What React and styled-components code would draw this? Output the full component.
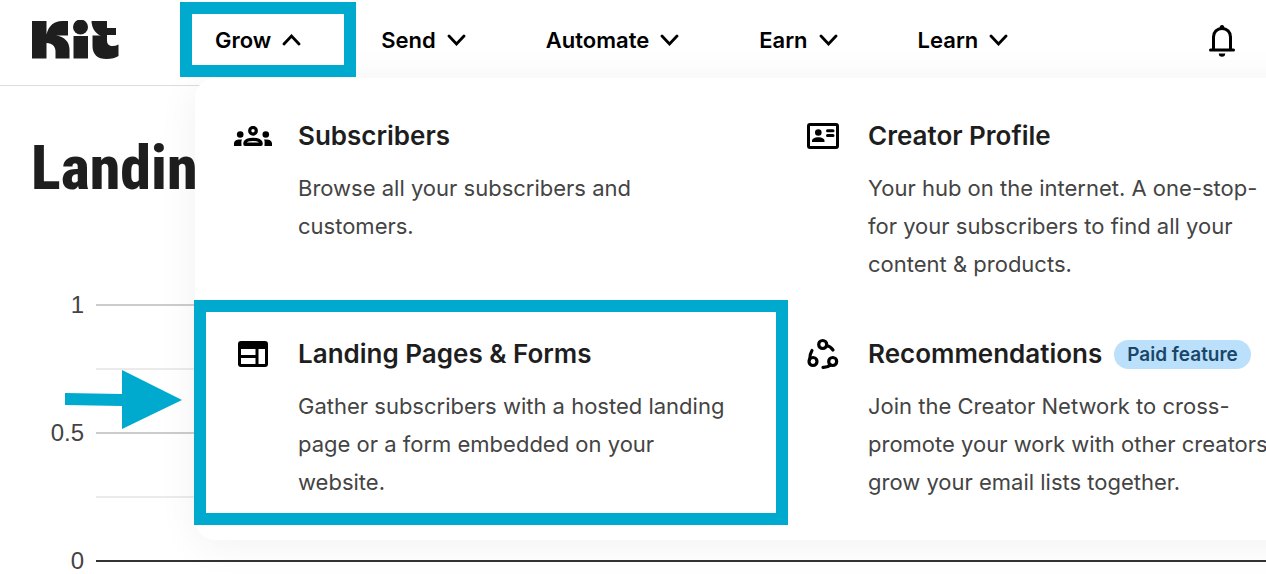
import React from 'react';
import styled, { createGlobalStyle, css } from 'styled-components';

const Global = createGlobalStyle`
  *, *::before, *::after { box-sizing: border-box; }
  body { margin: 0; background: #fff; font-family: Inter, "Liberation Sans", sans-serif; color: #1e1e1e; }
  h1, h2, p { margin: 0; }
`;

const ACCENT = '#00a9ce';

const Page = styled.div`
  position: relative;
  min-height: 100vh;
  overflow: hidden;
`;

const Header = styled.header`
  display: flex;
  align-items: center;
  height: 86px;
  padding: 0 31px 6px 32px;
  border-bottom: 1px solid #dcdcdc;
`;

const LogoLink = styled.a`
  display: block;
  width: 88px;
  height: 40px;
  margin-right: 95px;
  svg { display: block; }
`;

const Nav = styled.nav`
  position: relative;
  z-index: 2;
  display: flex;
  gap: 80px;
`;

const NavButton = styled.button`
  position: relative;
  display: flex;
  align-items: center;
  gap: 11px;
  padding: 0;
  border: 0;
  background: none;
  color: #000;
  font: 600 22px/32px Inter, "Liberation Sans", sans-serif;
  white-space: nowrap;
  svg { display: block; }
`;

const BellButton = styled.button`
  position: relative;
  z-index: 2;
  margin-left: auto;
  padding: 0;
  border: 0;
  background: none;
  svg { display: block; }
`;

const Highlight = styled.span`
  position: absolute;
  border: 12px solid ${ACCENT};
  pointer-events: none;
  ${(p) => p.$target === 'nav'
    ? css`inset: -22px -55px -21px -35px; background: #fff; z-index: -1;`
    : css`inset: -35px -23px -24px -1px;`}
`;

const Heading = styled.h1`
  padding: 50px 0 0 31px;
  font: 800 62px/64px "Roboto Condensed", "Open Sans Condensed", sans-serif;
  white-space: nowrap;
`;

const Chart = styled.div`
  display: flex;
  flex-direction: column;
  gap: 40px;
  padding-top: 93px;
`;

const ChartRow = styled.div`
  display: flex;
  align-items: center;
  gap: 12px;
  height: 24px;
`;

const AxisLabel = styled.span`
  width: 84px;
  text-align: right;
  font: 24px/24px "Liberation Sans", sans-serif;
  color: #444;
`;

const LINES = { major: '#ccc', minor: '#ebebeb', base: '#333' };

const GridLine = styled.span`
  flex: 1;
  height: 2px;
  background: ${(p) => LINES[p.$kind]};
`;

const Arrow = styled.svg`
  position: absolute;
  left: 65px;
  top: 370px;
  z-index: 2;
`;

const Menu = styled.div`
  position: absolute;
  top: 78px;
  left: 195px;
  z-index: 1;
  display: grid;
  grid-template-columns: 570px 570px;
  row-gap: 52px;
  padding: 39px 0;
  border-radius: 20px;
  background: #fff;
  box-shadow: 0 4px 42px rgba(0, 0, 0, 0.06);
`;

const MenuItem = styled.a`
  position: relative;
  display: grid;
  grid-template-columns: 40px 1fr;
  column-gap: 25px;
  padding-left: 38px;
  color: inherit;
  text-decoration: none;
`;

const IconSlot = styled.span`
  display: flex;
  align-items: center;
  justify-content: center;
  height: 38px;
`;

const TitleRow = styled.div`
  display: flex;
  align-items: center;
  gap: 12px;
`;

const Title = styled.h2`
  font-size: 26px;
  line-height: 38px;
  font-weight: 600;
  white-space: nowrap;
`;

const Badge = styled.span`
  padding: 0 13px;
  border-radius: 15px;
  background: #bae0fb;
  color: #1a4769;
  font-size: 19px;
  line-height: 29px;
  font-weight: 600;
  white-space: nowrap;
`;

const Description = styled.p`
  margin-top: 14px;
  min-height: 114px;
  color: #444;
  font-size: 22px;
  line-height: 38px;
  white-space: pre-line;
  min-width: max-content;
`;

const Logo = () => (
  <svg width="88" height="40" viewBox="0 0 88 40" fill="#1e1e1e" aria-hidden="true">
    <path d="M0 1h14.500v13.500C16.500 6 22 1 30 1h6v14.500H24c8 1 13.500 6 13.500 14v9h-14v-7c0-5-3-8-9-8.500v15.500H0z" />
    <circle cx="48.500" cy="7" r="7.500" />
    <path d="M41.500 16h14.500v22.500H41.500z" />
    <path d="M59.500 1H75v7h9v7h-9v5.500c0 4 2.500 5.500 5.500 5.500 2 0 4-.5 6-1.500V36c-3 2-7 3-12 3-9 0-14-4.500-14-13V15.500h8.500C64 14.500 59.500 8 59.500 1z" />
  </svg>
);

const Chevron = ({ up }) => (
  <svg width="19" height="12" viewBox="0 0 19 12" fill="none" stroke="#000" strokeWidth="2.800" strokeLinecap="round" aria-hidden="true">
    <path d={up ? 'M2 10l7.500-8 7.500 8' : 'M2 2l7.500 8 7.500-8'} />
  </svg>
);

const Bell = () => (
  <svg width="26" height="34" viewBox="0 -1 26 34" fill="none" stroke="#000" aria-hidden="true">
    <path d="M4.500 25V13c0-5 3.500-8.500 8.500-8.500s8.500 3.500 8.500 8.500v12" strokeWidth="3" />
    <path d="M1.500 26h23" strokeWidth="3" strokeLinecap="round" />
    <path d="M10.500 4.500a2.500 3.500 0 0 1 5 0zM9.800 29.500h6.400a3.200 3.200 0 0 1-6.400 0z" fill="#000" stroke="none" />
  </svg>
);

const People = () => (
  <svg width="38" height="20" viewBox="0 0 38 20" aria-hidden="true">
    <circle cx="6.200" cy="8.500" r="3.300" />
    <circle cx="31.800" cy="8.500" r="3.300" />
    <path d="M0 20v-2.500C0 14.500 3 13 8 13.500 7 15 7.500 17 7.500 20zM38 20v-2.500c0-3-3-4.500-8-4 1 1.500.5 3.500.5 6.500z" />
    <circle cx="19" cy="4.800" r="3.300" fill="none" stroke="#000" strokeWidth="3.200" />
    <path d="M11 18.200v-.7c0-5.500 16-5.500 16 0v.7z" fill="none" stroke="#000" strokeWidth="3.400" strokeLinejoin="round" />
  </svg>
);

const Card = () => (
  <svg width="32" height="26" viewBox="0 0 32 26" aria-hidden="true">
    <rect x="1.500" y="1.500" width="29" height="23" rx="1.500" fill="none" stroke="#000" strokeWidth="3" />
    <circle cx="11.300" cy="9.500" r="3.300" />
    <path d="M5 19v-1c0-5 12.500-5 12.500 0v1z" />
    <path d="M20.500 7.700h5.500M20.500 12.500h5.500" stroke="#000" strokeWidth="3" strokeLinecap="round" />
  </svg>
);

const Layout = () => (
  <svg width="30" height="26" viewBox="0 0 30 26" fill="none" stroke="#000" aria-hidden="true">
    <rect x="1.500" y="1.500" width="27" height="23" rx="1.500" strokeWidth="3" />
    <path d="M1.500 4.500h27M1.500 15.500h17M19 7v18" strokeWidth="3" />
    <path d="M2 6h26" strokeWidth="4" />
  </svg>
);

const Network = () => (
  <svg width="32" height="32" viewBox="0 0 32 32" fill="none" stroke="#000" strokeWidth="3.200" strokeLinecap="round" aria-hidden="true">
    <circle cx="15.700" cy="6.500" r="4" />
    <circle cx="6" cy="23.500" r="4" />
    <circle cx="25.700" cy="23.500" r="4" />
    <path d="M19.500 7.500q4 .8 6.500 4.500M2.800 21q0-5 2.200-8.500M23.500 27q-3 2.500-7.500 2.300" />
  </svg>
);

const navItems = ['Grow', 'Send', 'Automate', 'Earn', 'Learn'];

const menuItems = [
  { title: 'Subscribers', icon: <People />, text: 'Browse all your subscribers and\ncustomers.' },
  { title: 'Creator Profile', icon: <Card />, text: 'Your hub on the internet. A one-stop-\nfor your subscribers to find all your\ncontent & products.' },
  { title: 'Landing Pages & Forms', icon: <Layout />, text: 'Gather subscribers with a hosted landing\npage or a form embedded on your\nwebsite.', highlighted: true },
  { title: 'Recommendations', icon: <Network />, badge: 'Paid feature', text: 'Join the Creator Network to cross-\npromote your work with other creators\ngrow your email lists together.' },
];

const chartRows = [
  { label: '1', kind: 'major' },
  { kind: 'minor' },
  { label: '0.5', kind: 'major' },
  { kind: 'minor' },
  { label: '0', kind: 'base' },
];

export default function App() {
  return (
    <Page>
      <Global />
      <Header>
        <LogoLink href="#" aria-label="Kit"><Logo /></LogoLink>
        <Nav>
          {navItems.map((name, i) => (
            <NavButton key={name} type="button" aria-expanded={i === 0}>
              {i === 0 && <Highlight $target="nav" />}
              {name}
              <Chevron up={i === 0} />
            </NavButton>
          ))}
        </Nav>
        <BellButton type="button" aria-label="Notifications"><Bell /></BellButton>
      </Header>
      <Menu>
        {menuItems.map((item) => (
          <MenuItem key={item.title} href="#">
            {item.highlighted && <Highlight $target="menu" />}
            <IconSlot>{item.icon}</IconSlot>
            <div>
              <TitleRow>
                <Title>{item.title}</Title>
                {item.badge && <Badge>{item.badge}</Badge>}
              </TitleRow>
              <Description>{item.text}</Description>
            </div>
          </MenuItem>
        ))}
      </Menu>
      <main>
        <Heading>Landin</Heading>
        <Chart>
          {chartRows.map((row, i) => (
            <ChartRow key={i}>
              <AxisLabel>{row.label}</AxisLabel>
              <GridLine $kind={row.kind} />
            </ChartRow>
          ))}
        </Chart>
      </main>
      <Arrow width="117" height="60" viewBox="0 0 117 60" fill={ACCENT} aria-hidden="true">
        <path d="M0 23l57 1V0l60 30-60 29V36L0 35z" />
      </Arrow>
    </Page>
  );
}
